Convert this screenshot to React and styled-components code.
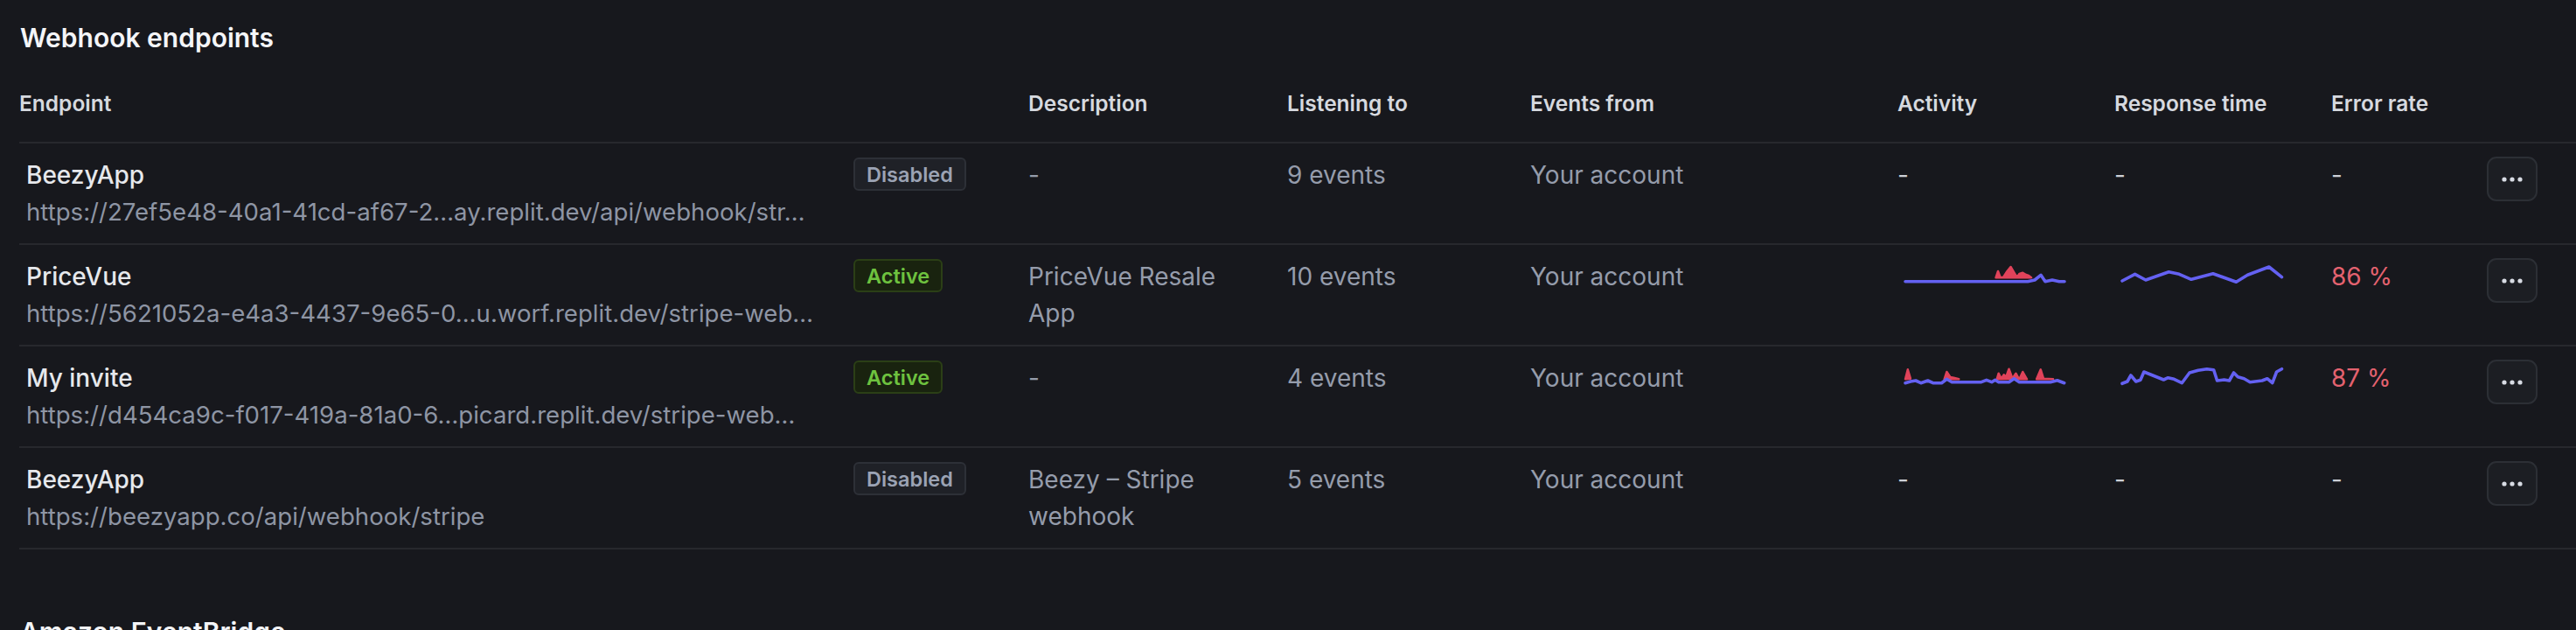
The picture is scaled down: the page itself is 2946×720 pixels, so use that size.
import React from "react";
import styled, { createGlobalStyle } from "styled-components";

const GlobalStyle = createGlobalStyle`
  html, body {
    margin: 0;
    background: #17181d;
  }
  body {
    font-family: Inter, "Noto Sans", "Liberation Sans", sans-serif;
    color: #e4e6eb;
  }
`;

const COLUMNS = "954px 200px 296px 278px 420px 248px 248px 178px 1fr";

const Page = styled.div`
  padding: 25px 0 0 22px;
`;

const SectionTitle = styled.h2`
  margin: 0;
  font-size: 30px;
  line-height: 36px;
  font-weight: 600;
  color: #f4f5f8;
  padding-left: 1px;
`;

const Table = styled.div`
  display: flex;
  flex-direction: column;
  margin-bottom: 76px;
`;

const HeaderRow = styled.div`
  display: grid;
  grid-template-columns: ${COLUMNS};
  padding: 40px 0 27px;
  border-bottom: 2px solid #27282d;
`;

const HeaderCell = styled.div`
  font-size: 24.5px;
  line-height: 34px;
  font-weight: 600;
  color: #d6d9df;
`;

const Row = styled.div`
  display: grid;
  grid-template-columns: ${COLUMNS};
  padding: 15px 0;
  border-bottom: 2px solid #27282d;
  align-items: start;
`;

const Cell = styled.div`
  font-size: 28px;
  line-height: 42px;
  color: ${(p) => (p.$light ? "#cdd0d7" : "#959cab")};
  min-width: 0;
`;

const EndpointCell = styled.div`
  padding-left: 8px;
  min-width: 0;
  display: flex;
  flex-direction: column;
`;

const Name = styled.span`
  font-size: 28px;
  line-height: 42px;
  font-weight: 500;
  color: #e6e8ec;
`;

const Url = styled.span`
  font-size: 27.6px;
  line-height: 42px;
  color: #8e95a4;
  white-space: nowrap;
  overflow: hidden;
  text-overflow: ellipsis;
  max-width: 930px;
`;

const Description = styled(Cell)`
  max-width: 240px;
`;

const Badge = styled.span`
  display: inline-flex;
  align-items: center;
  height: 38px;
  margin-top: 1px;
  padding: 0 13px;
  box-sizing: border-box;
  border-radius: 6px;
  font-size: 23.5px;
  font-weight: 600;
  border: 2px solid ${(p) => (p.$active ? "#2b3f16" : "#2d3037")};
  background: ${(p) => (p.$active ? "#19230f" : "#1f2127")};
  color: ${(p) => (p.$active ? "#6ec23f" : "#9ba3b4")};
`;

const ErrorRate = styled(Cell)`
  color: #e4626f;
`;

const Spark = styled.svg`
  display: block;
  margin: 7px 0 0 9px;
  overflow: visible;
`;

const MoreButton = styled.button`
  width: 58px;
  height: 51px;
  padding: 0;
  display: flex;
  align-items: center;
  justify-content: center;
  border-radius: 11px;
  border: 2px solid #2c2f35;
  background: #1c1e23;
  cursor: pointer;
`;

const BLUE = "#6461f2";
const RED = "#e0435a";

function Sparkline({ line, spikes = [] }) {
  return (
    <Spark width="184" height="24" viewBox="0 0 184 24">
      {spikes.map((s, i) => (
        <polygon
          key={i}
          points={s}
          fill={RED}
          stroke={RED}
          strokeWidth="2.5"
          strokeLinejoin="round"
        />
      ))}
      <polyline
        points={line}
        fill="none"
        stroke={BLUE}
        strokeWidth="3.6"
        strokeLinejoin="round"
        strokeLinecap="round"
      />
    </Spark>
  );
}

function Dots() {
  return (
    <svg width="24" height="8" viewBox="0 0 24 8">
      <circle cx="3" cy="4" r="2.6" fill="#d8dce4" />
      <circle cx="12" cy="4" r="2.6" fill="#d8dce4" />
      <circle cx="21" cy="4" r="2.6" fill="#d8dce4" />
    </svg>
  );
}

const endpoints = [
  {
    name: "BeezyApp",
    url: "https://27ef5e48-40a1-41cd-af67-2…ay.replit.dev/api/webhook/str…",
    active: false,
    description: "-",
    events: "9 events",
  },
  {
    name: "PriceVue",
    url: "https://5621052a-e4a3-4437-9e65-0…u.worf.replit.dev/stripe-web…",
    active: true,
    description: "PriceVue Resale App",
    events: "10 events",
    activity: {
      line: "0,19.7 140,19.7 148,18 155,12.3 160,19.7 168,18 176,19.7 182,19.7",
      spikes: [
        "103.5,15.3 106,8 108.6,15 112,15 116.5,8 120.5,3 124,9 126.4,13 128,14.5 130.4,11 134.3,9.7 138,12 141,13 144,15.3",
      ],
    },
    response:
      "0,19 14.6,11.3 26.9,18 53.3,8.7 65.2,11.3 79,17.3 103.9,10.7 130.4,20.3 143.4,12.3 167.9,3 182.5,14.7",
    error: "86 %",
  },
  {
    name: "My invite",
    url: "https://d454ca9c-f017-419a-81a0-6…picard.replit.dev/stripe-web…",
    active: true,
    description: "-",
    events: "4 events",
    activity: {
      line: "0,19.7 5.9,18 11.9,17 17.8,19.7 25.7,17 31.6,19.7 41.5,19.7 47.4,15.3 53.3,18.7 86.9,18.7 92.8,16.3 98.8,18.7 102.7,16.3 106.7,18.7 118.5,18.7 124.4,14.7 130.4,18.7 165.9,18.7 173.8,16.7 181.7,19.7",
      spikes: [
        "0,15.3 2.8,4.3 5.9,14.7",
        "44.6,15.3 47.4,7 51.4,13 55.3,13.7 61.2,15.3",
        "104.7,15.3 106.7,8.7 109.8,14.7 112.6,10.3 115.3,12.7 118.5,3.7 122.5,14.7 126.4,8.7 129.6,14.7",
        "130.4,15.3 134.3,7 139,15.3",
        "150.1,15.3 154.8,4.3 158,14.7 169,15.3",
      ],
    },
    response:
      "0,20.3 5.9,18 9.9,11 15.8,18 20.9,16.3 24.9,7 47.4,16 52.5,13.7 59.3,15.3 68.3,19.7 77,8 86.9,5.3 96.8,3.7 104.7,4.7 108.6,17 116.5,16 122.5,17 127.6,8 132.3,12.7 139.4,14.7 146.2,18.7 160,17 165.9,14.7 171.8,19.7 176.6,7 182.5,3.7",
    error: "87 %",
  },
  {
    name: "BeezyApp",
    url: "https://beezyapp.co/api/webhook/stripe",
    active: false,
    description: "Beezy – Stripe webhook",
    events: "5 events",
  },
];

const headers = [
  "Endpoint",
  "",
  "Description",
  "Listening to",
  "Events from",
  "Activity",
  "Response time",
  "Error rate",
  "",
];

export default function App() {
  return (
    <>
      <GlobalStyle />
      <Page>
        <SectionTitle>Webhook endpoints</SectionTitle>
        <Table>
          <HeaderRow>
            {headers.map((h, i) => (
              <HeaderCell key={i}>{h}</HeaderCell>
            ))}
          </HeaderRow>
          {endpoints.map((e, i) => (
            <Row key={i}>
              <EndpointCell>
                <Name>{e.name}</Name>
                <Url>{e.url}</Url>
              </EndpointCell>
              <div>
                <Badge $active={e.active}>{e.active ? "Active" : "Disabled"}</Badge>
              </div>
              <Description>{e.description}</Description>
              <Cell>{e.events}</Cell>
              <Cell>Your account</Cell>
              {e.activity ? (
                <Sparkline line={e.activity.line} spikes={e.activity.spikes} />
              ) : (
                <Cell $light>-</Cell>
              )}
              {e.response ? <Sparkline line={e.response} /> : <Cell $light>-</Cell>}
              {e.error ? <ErrorRate>{e.error}</ErrorRate> : <Cell $light>-</Cell>}
              <div>
                <MoreButton aria-label="More">
                  <Dots />
                </MoreButton>
              </div>
            </Row>
          ))}
        </Table>
        <SectionTitle>Amazon EventBridge</SectionTitle>
      </Page>
    </>
  );
}
